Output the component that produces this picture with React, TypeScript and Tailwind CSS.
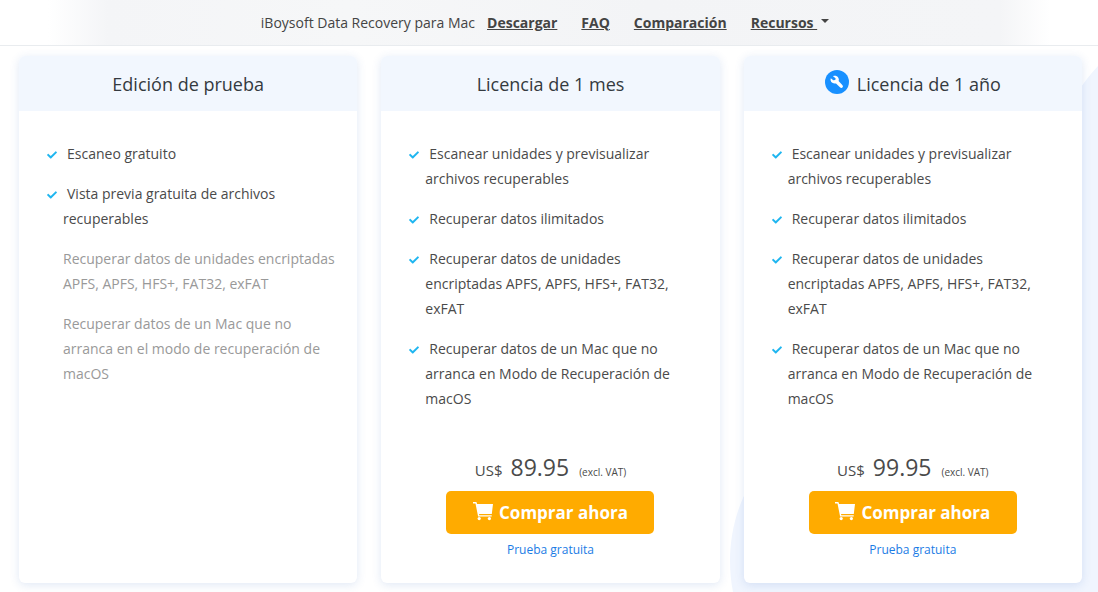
import { FaCheck } from "react-icons/fa";

type Feature = { text: string; included: boolean };
type Plan = { title: string; badge?: boolean; price?: string; features: Feature[] };

const paidFeatures: Feature[] = [
  { text: "Escanear unidades y previsualizar archivos recuperables", included: true },
  { text: "Recuperar datos ilimitados", included: true },
  { text: "Recuperar datos de unidades encriptadas APFS, APFS, HFS+, FAT32, exFAT", included: true },
  { text: "Recuperar datos de un Mac que no arranca en Modo de Recuperación de macOS", included: true },
];

const plans: Plan[] = [
  {
    title: "Edición de prueba",
    features: [
      { text: "Escaneo gratuito", included: true },
      { text: "Vista previa gratuita de archivos recuperables", included: true },
      { text: "Recuperar datos de unidades encriptadas APFS, APFS, HFS+, FAT32, exFAT", included: false },
      { text: "Recuperar datos de un Mac que no arranca en el modo de recuperación de macOS", included: false },
    ],
  },
  { title: "Licencia de 1 mes", price: "89.95", features: paidFeatures },
  { title: "Licencia de 1 año", badge: true, price: "99.95", features: paidFeatures },
];

function WrenchBadge() {
  return (
    <svg viewBox="0 0 24 24" className="mb-1 size-6 shrink-0" aria-hidden="true">
      <circle cx="12" cy="12" r="12" fill="#1890ff" />
      <path
        d="M8 6.2c2-.8 4.2-.2 5.3 1.6.7 1.2.7 2.300.3 3.300l3.900 4.100c1.400 1.600-.8 3.600-2.300 2.300l-4.200-4.100c-1.200.3-2.500.2-3.700-.6-1.600-1.100-2.100-3-1.500-4.600l2.500 2 2-.3.3-1.700z"
        fill="#fff"
      />
    </svg>
  );
}

function CartIcon() {
  return (
    <svg viewBox="0 0 20 20" className="mb-1 size-5 shrink-0" fill="#fff" aria-hidden="true">
      <path d="M0 1h3.4l.7 2H20l-1.2 10H6l.3 1.2h12.4v1.4H5.1L2.5 2.4H0z" />
      <circle cx="6.2" cy="17.6" r="1.6" />
      <circle cx="16.4" cy="17.6" r="1.6" />
    </svg>
  );
}

function PlanCard({ plan }: { plan: Plan }) {
  return (
    <section className="flex flex-col overflow-hidden rounded-md bg-white shadow-[0_2px_10px_rgba(60,110,190,0.16)]">
      <h2 className="flex h-[55px] items-center justify-center gap-2 bg-[#f2f7fe] pt-px text-lg text-[#343a40]">
        {plan.badge && <WrenchBadge />}
        {plan.title}
      </h2>
      <ul className="flex flex-col gap-[15px] pt-[30px] pr-5 pl-11 text-sm leading-[25px]">
        {plan.features.map((f) => (
          <li key={f.text} className={f.included ? "-indent-4 text-[#4a4a4a]" : "text-[#999]"}>
            {f.included && <FaCheck className="mr-2.5 inline size-2.5 text-[#1fb6f0]" aria-hidden="true" />}
            {f.text}
          </li>
        ))}
      </ul>
      {plan.price && (
        <div className="mt-auto flex flex-col items-center pb-[23px]">
          <p className="flex items-baseline text-[#4a4a4a]">
            <span className="text-[15px]">US$</span>
            <span className="ml-2 text-[23px] leading-8">{plan.price}</span>
            <span className="ml-2.5 text-[10px]">(excl. VAT)</span>
          </p>
          <button
            type="button"
            className="mt-2 flex h-[43px] w-52 items-center justify-center gap-1.5 rounded-[5px] bg-[#ffab00] pt-px text-[17px] font-bold text-white"
          >
            <CartIcon />
            Comprar ahora
          </button>
          <a href="#prueba" className="mt-1.5 text-xs leading-5 text-[#1b7ce5]">
            Prueba gratuita
          </a>
        </div>
      )}
    </section>
  );
}

export default function App() {
  return (
    <div className="relative min-h-screen overflow-hidden bg-white font-['Segoe_UI','Open_Sans',sans-serif]">
      <svg
        viewBox="0 0 370 530"
        className="absolute top-[62px] right-0 h-[530px] w-[370px]"
        fill="#f0f5fe"
        aria-hidden="true"
      >
        <path d="M5 530C-1 500 2 465 15 436C60 330 200 260 280 150C320 90 340 35 370 4V530z" />
      </svg>
      <header className="relative border-b border-[#e9ecef] bg-white">
        <div className="absolute inset-y-0 right-12 left-12 bg-[linear-gradient(to_right,transparent,#f4f5f7_60px,#f6f7f8_30%,#f3f4f6_60%,#f4f5f7_calc(100%-50px),transparent)]" />
        <nav className="relative flex h-[45px] items-center justify-center pr-2 text-sm text-[#444]" aria-label="Producto">
          <span className="mr-3">iBoysoft Data Recovery para Mac</span>
          <div className="flex gap-6 font-bold">
            <a href="#descargar" className="underline">Descargar</a>
            <a href="#faq" className="underline">FAQ</a>
            <a href="#comparacion" className="underline">Comparación</a>
            <a href="#recursos" className="flex items-center gap-1">
              <span className="whitespace-pre underline">{"Recursos "}</span>
              <svg viewBox="0 0 8 4" className="mb-1 h-1 w-2" fill="currentColor" aria-hidden="true">
                <path d="M0 0h8L4 4z" />
              </svg>
            </a>
          </div>
        </nav>
      </header>
      <main className="relative grid min-h-[537px] grid-cols-3 gap-6 pt-2.5 pr-4 pl-[19px]">
        {plans.map((plan) => (
          <PlanCard key={plan.title} plan={plan} />
        ))}
      </main>
    </div>
  );
}
